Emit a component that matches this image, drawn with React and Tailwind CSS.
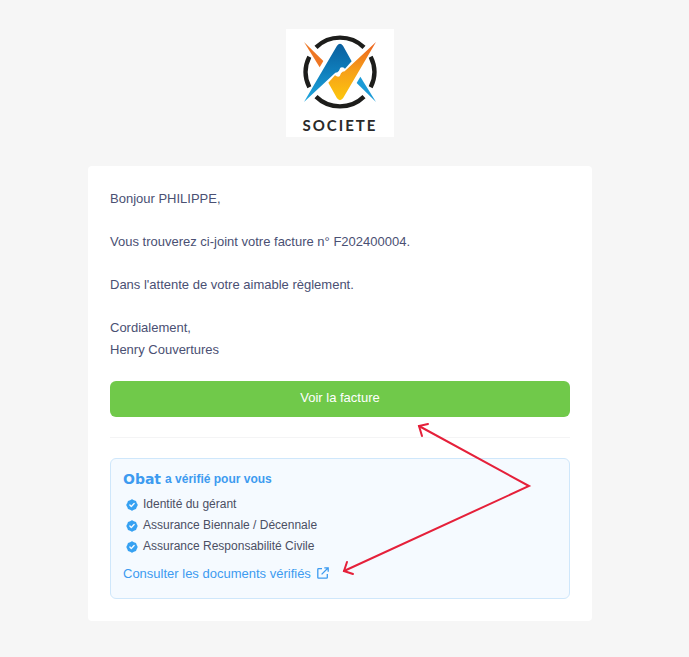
import { HiBadgeCheck } from "react-icons/hi";

const verifiedItems = [
  "Identité du gérant",
  "Assurance Biennale / Décennale",
  "Assurance Responsabilité Civile",
];

// ========================= COMPANY LOGO =========================
function CompanyLogo() {
  return (
    <div className="w-[108px] h-[108px] bg-white flex flex-col items-center">
      <svg viewBox="0 0 324 264" className="w-[108px] h-[88px] shrink-0" aria-hidden="true">
        <defs>
          <linearGradient id="blue" x1="0" y1="0" x2="0" y2="1">
            <stop offset="0" stopColor="#0a5f9e" />
            <stop offset="0.5" stopColor="#0f80bd" />
            <stop offset="1" stopColor="#22a9e0" />
          </linearGradient>
          <linearGradient id="orange" x1="0" y1="0" x2="0" y2="1">
            <stop offset="0" stopColor="#ec5f1e" />
            <stop offset="0.5" stopColor="#f6a01a" />
            <stop offset="1" stopColor="#fdc70c" />
          </linearGradient>
        </defs>
        <g fill="none" stroke="#1d1d1b" strokeWidth="13">
          <path d="M90 55A103 103 0 0 1 234 55" />
          <path d="M90 203A103 103 0 0 0 234 203" />
          <path d="M70 83A103 103 0 0 0 70 175" />
          <path d="M254 83A103 103 0 0 1 254 175" />
        </g>
        <path fill="#ee7623" d="M54 39L112 96L101 115Z" />
        <path fill="#1b9bd7" d="M270 219L212 162L223 143Z" />
        <path
          fill="url(#blue)"
          d="M54 219L153 50Q162 39 171 50L197 97L177 119Q170 113 163 116L159 125Q155 131 148 131Z"
        />
        <path
          fill="url(#orange)"
          d="M270 39L171 208Q162 219 153 208L127 161L147 139Q154 145 161 142L165 133Q169 127 176 127Z"
        />
      </svg>
      <span className="font-['Lato',sans-serif] font-bold text-[15px] leading-4 tracking-[2px] text-[#2a2a2a]">
        SOCIETE
      </span>
    </div>
  );
}

function ExternalIcon() {
  return (
    <svg
      viewBox="0 0 12 12"
      className="size-3 mb-0.5"
      fill="none"
      stroke="currentColor"
      strokeWidth="1.3"
      aria-hidden="true"
    >
      <path d="M5 1.7H1.5Q.8 1.7 .8 2.4V10.5Q.8 11.2 1.5 11.2H9.6Q10.3 11.2 10.3 10.5V7" />
      <path d="M7.3 .8H11.2V4.7M11 1L4.6 7.4" />
    </svg>
  );
}

// ========================= POINTING ARROWS =========================
function Arrows() {
  return (
    <svg
      viewBox="0 0 192 158"
      className="absolute right-[60px] top-[254px] w-[192px] h-[158px] pointer-events-none"
      fill="none"
      stroke="#e5203a"
      strokeWidth="2"
      strokeLinecap="round"
      aria-hidden="true"
    >
      <path d="M79 6L189 66L4 151" />
      <path d="M88 4L79 6L82 16" />
      <path d="M7 142L4 151L13 154" />
    </svg>
  );
}

export default function App() {
  return (
    <div className="min-h-screen bg-[#f6f6f6] pt-[29px] pb-9 pr-[9px] flex flex-col items-center gap-[29px] font-['Liberation_Sans',sans-serif] text-[13px] text-[#4a5073]">
      <CompanyLogo />

      <main className="relative w-full max-w-[504px] bg-white rounded p-[22px]">
        <div className="flex flex-col gap-[21px] leading-[22px]">
          <p>Bonjour PHILIPPE,</p>
          <p>Vous trouverez ci-joint votre facture n° F202400004.</p>
          <p>Dans l'attente de votre aimable règlement.</p>
          <p>
            Cordialement,
            <br />
            Henry Couvertures
          </p>
        </div>

        <button
          type="button"
          className="mt-5 w-full h-9 pb-0.5 rounded-md bg-[#70c94a] text-white"
        >
          Voir la facture
        </button>

        <hr className="my-5 border-[#f4f4f5]" />

        {/* ================== VERIFIED DOCUMENTS ================== */}
        <section className="rounded-md border border-[#cfe7fb] bg-[#f5faff] px-3 pt-2.5 pb-3.5">
          <h2 className="flex items-center gap-1 text-[12px] leading-5 font-bold text-[#3d9bf0]">
            <span className="font-['DejaVu_Sans',sans-serif] text-[14px]">Obat</span>
            a vérifié pour vous
          </h2>
          <ul className="mt-[5px] text-[12px] leading-[21px] text-[#4b4f63]">
            {verifiedItems.map((item) => (
              <li key={item} className="flex items-center gap-1 pl-0.5">
                <HiBadgeCheck className="size-3.5 text-[#36a1f2]" />
                {item}
              </li>
            ))}
          </ul>
          <a href="#documents" className="mt-[7px] flex items-center gap-1.5 leading-5 text-[#3d9bf0]">
            Consulter les documents vérifiés
            <ExternalIcon />
          </a>
        </section>

        <Arrows />
      </main>
    </div>
  );
}
